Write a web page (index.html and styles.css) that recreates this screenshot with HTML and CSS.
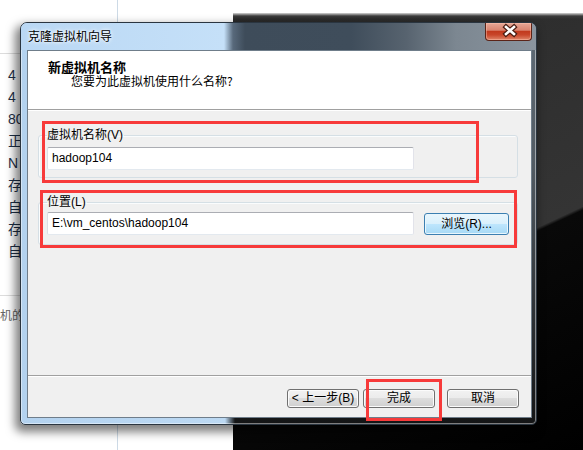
FILE: index.html
```html
<!DOCTYPE html>
<html lang="zh-CN">
<head>
<meta charset="utf-8">
<title>克隆虚拟机向导</title>
<link rel="stylesheet" href="styles.css">
</head>
<body>
<div class="bgpage">
  <div class="bgcol">
    <div class="rule"></div>
    <ul class="bglist">
      <li>4</li><li>4</li><li>80</li><li>正</li><li>N</li><li>存</li><li>自</li><li>存</li><li>自</li>
    </ul>
    <div class="rule rule-low"></div>
    <div class="bgnote">机的</div>
  </div>
</div>

<div class="darkwin"></div>

<div class="dialog">
  <div class="titlebar">
    <span class="title">克隆虚拟机向导</span>
    <div class="close">
      <svg width="47" height="18" viewBox="0 0 47 18">
        <path d="M20 5 L28 12 M28 5 L20 12" stroke="#4a1c12" stroke-width="5" stroke-linecap="square" fill="none"/>
        <path d="M20 5 L28 12 M28 5 L20 12" stroke="#ffffff" stroke-width="2.6" stroke-linecap="square" fill="none"/>
      </svg>
    </div>
  </div>
  <div class="client">
    <div class="header">
      <div class="h-title">新虚拟机名称</div>
      <div class="h-sub">您要为此虚拟机使用什么名称?</div>
    </div>
    <div class="main">
      <fieldset class="group g1">
        <legend>虚拟机名称(V)</legend>
        <div class="field">hadoop104</div>
      </fieldset>
      <fieldset class="group g2">
        <legend>位置(L)</legend>
        <div class="row">
          <div class="field">E:\vm_centos\hadoop104</div>
          <div class="btn browse">浏览(R)...</div>
        </div>
      </fieldset>
    </div>
    <div class="footer">
      <div class="btn back">&lt; 上一步(B)</div>
      <div class="btn finish">完成</div>
      <div class="btn cancel">取消</div>
    </div>
  </div>
</div>

<div class="mark m1"></div>
<div class="mark m2"></div>
<div class="mark m3"></div>
</body>
</html>
```
FILE: styles.css
```css
* { box-sizing: border-box; }
html, body { margin: 0; padding: 0; }
body {
  width: 583px;
  height: 450px;
  overflow: hidden;
  position: relative;
  background: #fff;
  font-family: "Liberation Sans", "Noto Sans CJK SC", sans-serif;
  font-size: 12px;
  color: #000;
}

/* background page */
.bgpage { display: flex; height: 450px; }
.bgcol {
  width: 118px;
  border-right: 1px solid #cddae6;
  padding-top: 53px;
}
.rule { height: 1px; background: #dcdcdc; }
.rule-low { margin-top: 33px; }
.bglist {
  list-style: none;
  margin: 10px 0 0;
  padding: 0 0 0 8px;
  font-family: "Liberation Sans", "Noto Sans CJK SC", sans-serif;
  font-size: 14px;
  line-height: 22px;
  color: #1d2f47;
}
.bgnote {
  margin-top: 11px;
  line-height: 16px;
  color: #666;
  font-family: "Noto Sans CJK SC", sans-serif;
}

/* dark window behind */
.darkwin {
  position: absolute;
  left: 233px;
  top: 13px;
  right: 0;
  bottom: 0;
  background:
    linear-gradient(to bottom, #d6d6d6 0, #3c3c3c 3px, rgba(60,60,60,0) 6px),
    linear-gradient(155deg, #2a2a2a 0, #343434 59.4%, #090909 60%, #000 100%);
}

/* dialog */
.dialog {
  position: absolute;
  left: 20px;
  top: 22px;
  width: 517px;
  height: 403px;
  border: 1px solid #2a3540;
  border-radius: 7px 7px 5px 5px;
  padding: 0 4px 6px 6px;
  display: flex;
  flex-direction: column;
  overflow: hidden;
  box-shadow: inset 0 0 0 1px rgba(255,255,255,0.45), -3px 5px 10px 2px rgba(0,0,0,0.5);
  background:
    linear-gradient(to right, #b3d2ef 0, #bcd9f3 204px, rgba(188,217,243,0) 214px),
    linear-gradient(to bottom, #5f6b76 0, #535c64 35%, #2a2e32 75%, #141516 100%);
}
.titlebar {
  height: 27px;
  margin: 0 -4px 0 -6px;
  padding: 0 4px 0 7px;
  display: flex;
  align-items: center;
  justify-content: space-between;
  background: linear-gradient(to right, #bad8f4 0, #c5e0f8 203px, #58697b 212px, #3e4c5a 224px, #3f4d5b 330px, #57636f 385px, #7c8791 435px, #8a949e 515px);
}
.title {
  font-family: "Noto Sans CJK SC", sans-serif;
  font-size: 12px;
  line-height: 16px;
  color: #000;
  text-shadow: 0 0 5px #fff, 0 0 3px #fff;
  margin-top: -1px;
}
.close {
  align-self: flex-start;
  width: 47px;
  height: 18px;
  border: 1px solid #5b2418;
  border-top: none;
  border-radius: 0 0 4px 4px;
  background: linear-gradient(to bottom, #e6a796 0, #d98470 42%, #c23a1e 50%, #c8462a 70%, #e0866a 100%);
  box-shadow: inset 0 0 0 1px rgba(255,200,180,0.45);
}
.close svg { display: block; margin-top: -1px; }

.client {
  flex: 1;
  border: 1px solid #6f7d8a;
  background: #f0f0f0;
  display: flex;
  flex-direction: column;
}
.header {
  height: 59px;
  background: #fff;
  border-bottom: 1px solid #a0a0a0;
  padding: 9px 0 0 20px;
  font-family: "Noto Sans CJK SC", sans-serif;
}
.h-title { font-weight: bold; font-size: 13px; line-height: 14px; }
.h-sub { padding-left: 23px; font-size: 12px; line-height: 14px; }

.main {
  flex: 1;
  border-top: 1px solid #fff;
  padding: 0 13px 0 10px;
  display: flex;
  flex-direction: column;
}
.group {
  margin: 17px 0 0;
  min-width: 0;
  border: 1px solid #d5dfe5;
  border-radius: 3px;
  box-shadow: inset 1px 1px 0 #fafcfd;
}
.g1 { padding: 5px 8px 7px 8px; }
.g2 { padding: 3px 8px 9px 8px; }
.group legend {
  padding: 0 1px 0 0;
  font-size: 12px;
  line-height: 14px;
}
.field {
  width: 367px;
  height: 23px;
  border: 1px solid;
  border-color: #abadb3 #e2e3ea #e3e9ef #dbdfe6;
  border-radius: 2px;
  background: #fff;
  padding: 0 4px;
  font-family: "Liberation Sans", sans-serif;
  font-size: 12px;
  line-height: 21px;
  white-space: nowrap;
}
.row { display: flex; align-items: flex-end; gap: 10px; }

.btn {
  height: 19px;
  width: 72px;
  border: 1px solid #707070;
  border-radius: 3px;
  background: linear-gradient(to bottom, #f2f2f2 0, #ebebeb 50%, #dddddd 50%, #cfcfcf 100%);
  box-shadow: inset 0 0 0 1px #fbfbfb;
  font-family: "Liberation Sans", "Noto Sans CJK SC", sans-serif;
  font-size: 12px;
  line-height: 17px;
  text-align: center;
  white-space: nowrap;
}
.browse {
  width: 85px;
  height: 22px;
  line-height: 20px;
  border-color: #3c7fb1;
  background: linear-gradient(to bottom, #eaf6fd 0, #d9f0fc 50%, #bee6fd 50%, #a7d9f5 100%);
  box-shadow: inset 0 0 0 1px #e8f6fd;
}

.footer {
  height: 42px;
  border-top: 1px solid #a0a0a0;
  box-shadow: inset 0 1px 0 #fff;
  padding: 13px 12px 0 0;
  display: flex;
  justify-content: flex-end;
  align-items: flex-start;
}
.back { margin-right: 4px; }
.finish { margin-right: 12px; }

/* red annotation frames */
.mark { position: absolute; border: 3px solid #f73a3a; }
.m1 { left: 42px; top: 121px; width: 437px; height: 62px; }
.m2 { left: 40px; top: 190px; width: 477px; height: 58px; }
.m3 { left: 366px; top: 379px; width: 76px; height: 42px; }
```
